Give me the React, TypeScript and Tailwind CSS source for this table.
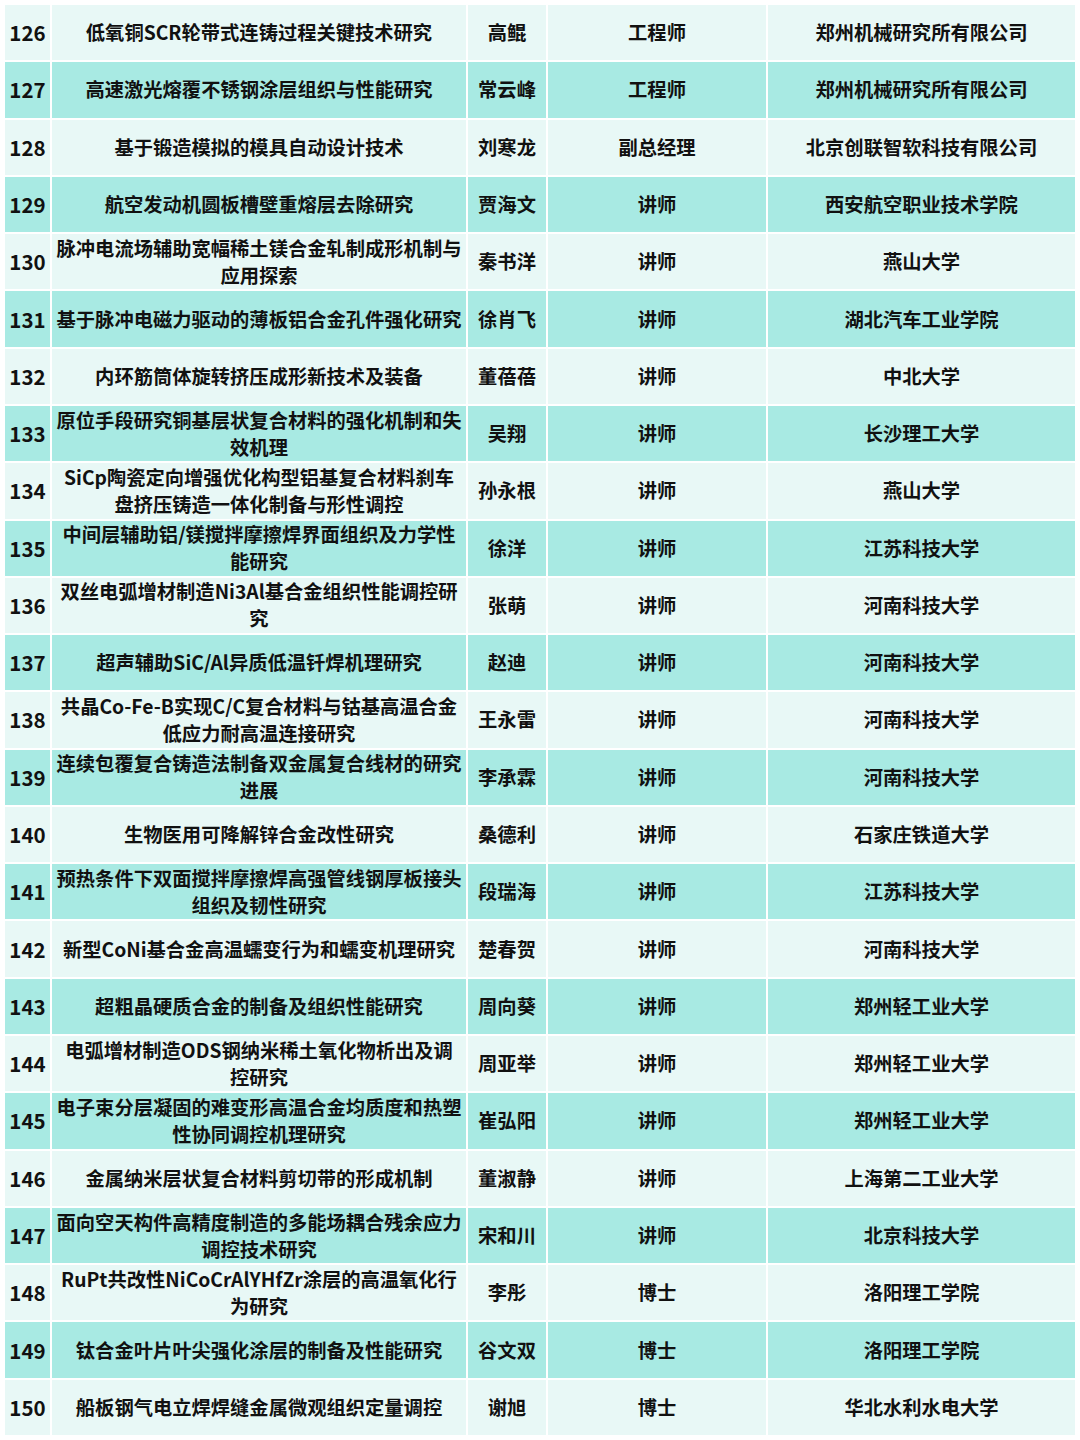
const rows: [string, string[], string, string, string][] = [
  ["126", ["低氧铜SCR轮带式连铸过程关键技术研究"], "高鲲", "工程师", "郑州机械研究所有限公司"],
  ["127", ["高速激光熔覆不锈钢涂层组织与性能研究"], "常云峰", "工程师", "郑州机械研究所有限公司"],
  ["128", ["基于锻造模拟的模具自动设计技术"], "刘寒龙", "副总经理", "北京创联智软科技有限公司"],
  ["129", ["航空发动机圆板槽壁重熔层去除研究"], "贾海文", "讲师", "西安航空职业技术学院"],
  ["130", ["脉冲电流场辅助宽幅稀土镁合金轧制成形机制与", "应用探索"], "秦书洋", "讲师", "燕山大学"],
  ["131", ["基于脉冲电磁力驱动的薄板铝合金孔件强化研究"], "徐肖飞", "讲师", "湖北汽车工业学院"],
  ["132", ["内环筋筒体旋转挤压成形新技术及装备"], "董蓓蓓", "讲师", "中北大学"],
  ["133", ["原位手段研究铜基层状复合材料的强化机制和失", "效机理"], "吴翔", "讲师", "长沙理工大学"],
  ["134", ["SiCp陶瓷定向增强优化构型铝基复合材料刹车", "盘挤压铸造一体化制备与形性调控"], "孙永根", "讲师", "燕山大学"],
  ["135", ["中间层辅助铝/镁搅拌摩擦焊界面组织及力学性", "能研究"], "徐洋", "讲师", "江苏科技大学"],
  ["136", ["双丝电弧增材制造Ni3Al基合金组织性能调控研", "究"], "张萌", "讲师", "河南科技大学"],
  ["137", ["超声辅助SiC/Al异质低温钎焊机理研究"], "赵迪", "讲师", "河南科技大学"],
  ["138", ["共晶Co-Fe-B实现C/C复合材料与钴基高温合金", "低应力耐高温连接研究"], "王永雷", "讲师", "河南科技大学"],
  ["139", ["连续包覆复合铸造法制备双金属复合线材的研究", "进展"], "李承霖", "讲师", "河南科技大学"],
  ["140", ["生物医用可降解锌合金改性研究"], "桑德利", "讲师", "石家庄铁道大学"],
  ["141", ["预热条件下双面搅拌摩擦焊高强管线钢厚板接头", "组织及韧性研究"], "段瑞海", "讲师", "江苏科技大学"],
  ["142", ["新型CoNi基合金高温蠕变行为和蠕变机理研究"], "楚春贺", "讲师", "河南科技大学"],
  ["143", ["超粗晶硬质合金的制备及组织性能研究"], "周向葵", "讲师", "郑州轻工业大学"],
  ["144", ["电弧增材制造ODS钢纳米稀土氧化物析出及调", "控研究"], "周亚举", "讲师", "郑州轻工业大学"],
  ["145", ["电子束分层凝固的难变形高温合金均质度和热塑", "性协同调控机理研究"], "崔弘阳", "讲师", "郑州轻工业大学"],
  ["146", ["金属纳米层状复合材料剪切带的形成机制"], "董淑静", "讲师", "上海第二工业大学"],
  ["147", ["面向空天构件高精度制造的多能场耦合残余应力", "调控技术研究"], "宋和川", "讲师", "北京科技大学"],
  ["148", ["RuPt共改性NiCoCrAlYHfZr涂层的高温氧化行", "为研究"], "李彤", "博士", "洛阳理工学院"],
  ["149", ["钛合金叶片叶尖强化涂层的制备及性能研究"], "谷文双", "博士", "洛阳理工学院"],
  ["150", ["船板钢气电立焊焊缝金属微观组织定量调控"], "谢旭", "博士", "华北水利水电大学"],
];

function Cell({ bg, children }: { bg: string; children: React.ReactNode }) {
  return (
    <div className={`${bg} flex flex-col items-center justify-center text-center`}>
      {children}
    </div>
  );
}

export default function App() {
  return (
    <div
      className="min-h-[1440px] w-[1080px] bg-white p-[5px] font-bold text-[#111]"
      style={{ fontFamily: '"Noto Sans CJK SC", "Noto Sans", sans-serif' }}
    >
      <div className="grid h-[1430px] grid-cols-[45px_414px_78px_218px_307px] grid-rows-[repeat(25,1fr)] gap-[2px] text-[19.3px] leading-[27px]">
        {rows.map(([no, title, name, job, org], i) => {
          const bg = i % 2 === 0 ? "bg-[#e8f8f6]" : "bg-[#a8eae3]";
          return (
            <div key={no} className="contents">
              <Cell bg={bg}>
                <span className="text-[20.5px]">{no}</span>
              </Cell>
              <Cell bg={bg}>
                {title.map((l) => (
                  <span key={l} className="whitespace-nowrap">
                    {l}
                  </span>
                ))}
              </Cell>
              <Cell bg={bg}>{name}</Cell>
              <Cell bg={bg}>{job}</Cell>
              <Cell bg={bg}>{org}</Cell>
            </div>
          );
        })}
      </div>
    </div>
  );
}
